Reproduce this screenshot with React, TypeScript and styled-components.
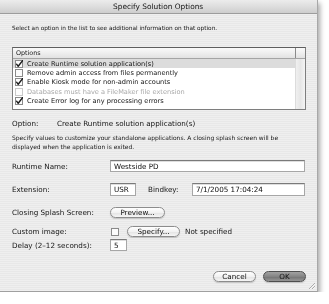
import React from "react";
import styled, { createGlobalStyle } from "styled-components";

const GlobalStyle = createGlobalStyle`
  html, body {
    margin: 0;
    padding: 0;
    background: #ffffff;
  }
  body {
    font-family: "DejaVu Sans", "Liberation Sans", sans-serif;
    color: #111;
    -webkit-font-smoothing: antialiased;
  }
`;

const Window = styled.div`
  position: relative;
  width: 318px;
  height: 292px;
  box-sizing: border-box;
  display: flex;
  flex-direction: column;
  background-color: #ececec;
  background-image: repeating-linear-gradient(
    to bottom,
    #efefef 0px,
    #efefef 1px,
    #e8e8e8 1px,
    #e8e8e8 2px
  );
  border-right: 1px solid #a8a8a8;
  border-bottom: 1px solid #a0a0a0;
  box-shadow: 2px 3px 5px rgba(0, 0, 0, 0.35);
`;

const TitleBar = styled.div`
  height: 13px;
  flex: none;
  display: flex;
  align-items: center;
  justify-content: center;
  background: linear-gradient(to bottom, #ececec 0%, #dcdcdc 55%, #cdcdcd 100%);
  border-bottom: 1px solid #9c9c9c;
  font-size: 7.4px;
  color: #111;
`;

const TitleText = styled.span`
  will-change: transform;
`;

const Body = styled.div`
  flex: 1;
  display: flex;
  flex-direction: column;
  padding: 0 11px 0 12px;
  will-change: transform;
`;

const Small = styled.div<{ $top?: number; $lh?: number; $size: number }>`
  margin-top: ${(p) => p.$top ?? 0}px;
  font-size: ${(p) => p.$size}px;
  line-height: ${(p) => p.$lh ?? 9}px;
  color: #161616;
  white-space: nowrap;
`;

const ListBox = styled.div`
  margin-top: 14px;
  height: 63px;
  box-sizing: border-box;
  border: 1px solid #7e7e7e;
  border-top-color: #5e5e5e;
  background: #ffffff;
  display: flex;
  flex-direction: column;
`;

const ListHeader = styled.div`
  height: 10px;
  flex: none;
  display: flex;
  border-bottom: 1px solid #a4a4a4;
  background: linear-gradient(to bottom, #fafafa, #e2e2e2);
`;

const HeaderCell = styled.div`
  flex: 1;
  display: flex;
  align-items: center;
  padding-left: 3px;
  font-size: 6.4px;
  color: #161616;
`;

const HeaderCorner = styled.div`
  width: 9px;
  flex: none;
  border-left: 1px solid #8a8a8a;
`;

const ListMain = styled.div`
  flex: 1;
  display: flex;
`;

const Rows = styled.div`
  flex: 1;
`;

const ScrollTrack = styled.div`
  width: 9px;
  flex: none;
  border-left: 1px solid #dcdcdc;
  background: linear-gradient(to right, #f0f0f0, #e6e6e6 50%, #f4f4f4);
`;

const ListRow = styled.div<{ $selected?: boolean; $disabled?: boolean }>`
  height: 9.3px;
  display: flex;
  align-items: center;
  gap: 4px;
  padding-left: 2px;
  font-size: 6.6px;
  white-space: nowrap;
  color: ${(p) => (p.$disabled ? "#a8a8a8" : "#141414")};
  background: ${(p) => (p.$selected ? "#dcdcdc" : "transparent")};
`;

const OptionLine = styled.div`
  margin-top: 8px;
  height: 10px;
  display: flex;
  align-items: center;
  font-size: 7.2px;
  color: #141414;
  white-space: nowrap;
`;

const OptionLabel = styled.span`
  width: 45px;
  flex: none;
`;

const FormRow = styled.div<{ $top: number; $h: number }>`
  margin-top: ${(p) => p.$top}px;
  height: ${(p) => p.$h}px;
  display: flex;
  align-items: center;
  font-size: 7.2px;
  color: #141414;
  white-space: nowrap;
`;

const Label = styled.span<{ $w?: number; $pad?: number }>`
  width: ${(p) => p.$w ?? 98}px;
  padding-left: ${(p) => p.$pad ?? 0}px;
  box-sizing: border-box;
  flex: none;
`;

const Field = styled.div<{ $w?: number; $h?: number }>`
  box-sizing: border-box;
  ${(p) => (p.$w ? `width: ${p.$w}px; flex: none;` : "flex: 1;")}
  height: ${(p) => p.$h ?? 12}px;
  margin-right: 1px;
  display: flex;
  align-items: center;
  padding-left: 3px;
  background: #ffffff;
  border: 1px solid #a6a6a6;
  border-top-color: #7a7a7a;
  box-shadow: inset 0 1px 0 #dedede;
  font-size: 7.2px;
  color: #0e0e0e;
`;

const PillButton = styled.div<{ $w: number; $default?: boolean }>`
  width: ${(p) => p.$w}px;
  height: 11px;
  box-sizing: border-box;
  flex: none;
  display: flex;
  align-items: center;
  justify-content: center;
  border-radius: 6px;
  border: 1px solid ${(p) => (p.$default ? "#4e4e4e" : "#8c8c8c")};
  background: ${(p) =>
    p.$default
      ? "linear-gradient(to bottom, #a2a2a2 0%, #848484 50%, #747474 55%, #969696 100%)"
      : "linear-gradient(to bottom, #ffffff 0%, #f2f2f2 50%, #e4e4e4 55%, #f6f6f6 100%)"};
  box-shadow: 0 1px 1px rgba(0, 0, 0, 0.18);
  font-size: 7.2px;
  color: #101010;
`;

const BoxWrap = styled.span<{ $disabled?: boolean }>`
  display: inline-flex;
  width: 8px;
  height: 8px;
  flex: none;
  opacity: ${(p) => (p.$disabled ? 0.45 : 1)};
`;

const InlineGap = styled.span<{ $l?: number; $r?: number }>`
  display: inline-flex;
  margin-left: ${(p) => p.$l ?? 0}px;
  margin-right: ${(p) => p.$r ?? 0}px;
`;

const Footer = styled.div`
  margin-top: 20px;
  display: flex;
  justify-content: flex-end;
  gap: 7px;
`;

const Grip = styled.svg`
  position: absolute;
  right: 1px;
  bottom: 1px;
`;

function CheckBox({ checked, disabled }: { checked?: boolean; disabled?: boolean }) {
  return (
    <BoxWrap $disabled={disabled}>
      <svg width="8" height="8" viewBox="0 0 8 8">
        <rect x="0.5" y="0.5" width="7" height="7" fill="#fbfbfb" stroke="#8a8a8a" />
        {checked && (
          <path
            d="M1.6 4.2 L3.2 6.3 L7.6 0.6"
            fill="none"
            stroke="#1a1a1a"
            strokeWidth="1.4"
            strokeLinecap="round"
            strokeLinejoin="round"
          />
        )}
      </svg>
    </BoxWrap>
  );
}

const options = [
  { text: "Create Runtime solution application(s)", checked: true, selected: true },
  { text: "Remove admin access from files permanently", checked: false },
  { text: "Enable Kiosk mode for non-admin accounts", checked: true },
  { text: "Databases must have a FileMaker file extension", checked: false, disabled: true },
  { text: "Create Error log for any processing errors", checked: true },
];

export default function App() {
  return (
    <>
      <GlobalStyle />
      <Window>
        <TitleBar>
          <TitleText>Specify Solution Options</TitleText>
        </TitleBar>
        <Body>
          <Small $top={10} $size={5.78}>
            Select an option in the list to see additional information on that option.
          </Small>
          <ListBox>
            <ListHeader>
              <HeaderCell>Options</HeaderCell>
              <HeaderCorner />
            </ListHeader>
            <ListMain>
              <Rows>
                {options.map((o) => (
                  <ListRow key={o.text} $selected={o.selected} $disabled={o.disabled}>
                    <CheckBox checked={o.checked} disabled={o.disabled} />
                    {o.text}
                  </ListRow>
                ))}
              </Rows>
              <ScrollTrack />
            </ListMain>
          </ListBox>
          <OptionLine>
            <OptionLabel>Option:</OptionLabel>
            Create Runtime solution application(s)
          </OptionLine>
          <Small $top={6} $lh={8.5} $size={5.98}>
            Specify values to customize your standalone applications. A closing splash screen will be
            <br />
            displayed when the application is exited.
          </Small>
          <FormRow $top={9} $h={12}>
            <Label>Runtime Name:</Label>
            <Field>Westside PD</Field>
          </FormRow>
          <FormRow $top={11} $h={13}>
            <Label>Extension:</Label>
            <Field $w={26} $h={13}>USR</Field>
            <Label $w={55} $pad={11}>
              Bindkey:
            </Label>
            <Field $h={13}>7/1/2005 17:04:24</Field>
          </FormRow>
          <FormRow $top={10} $h={13}>
            <Label>Closing Splash Screen:</Label>
            <PillButton $w={55}>Preview...</PillButton>
          </FormRow>
          <FormRow $top={6} $h={13}>
            <Label>Custom image:</Label>
            <InlineGap $l={1} $r={8}>
              <CheckBox />
            </InlineGap>
            <PillButton $w={53}>Specify...</PillButton>
            <InlineGap $l={5}>Not specified</InlineGap>
          </FormRow>
          <FormRow $top={1} $h={12}>
            <Label>Delay (2–12 seconds):</Label>
            <Field $w={17}>5</Field>
          </FormRow>
          <Footer>
            <PillButton $w={43}>Cancel</PillButton>
            <PillButton $w={43} $default>
              OK
            </PillButton>
          </Footer>
        </Body>
        <Grip width="9" height="9" viewBox="0 0 9 9">
          <path d="M8 2 L2 8 M8 5 L5 8" stroke="#9a9a9a" strokeWidth="0.8" />
          <path d="M8.6 2.6 L2.6 8.6 M8.6 5.6 L5.6 8.6" stroke="#ffffff" strokeWidth="0.6" />
        </Grip>
      </Window>
    </>
  );
}
